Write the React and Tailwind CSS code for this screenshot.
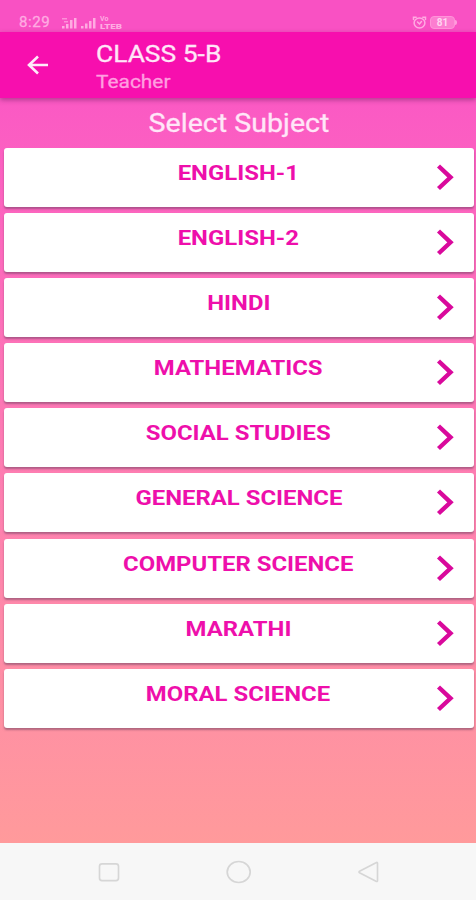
const subjects = [
  "ENGLISH-1",
  "ENGLISH-2",
  "HINDI",
  "MATHEMATICS",
  "SOCIAL STUDIES",
  "GENERAL SCIENCE",
  "COMPUTER SCIENCE",
  "MARATHI",
  "MORAL SCIENCE"
];

const StatusBar = () => {
  return (
    <div className="flex h-8 items-start justify-between bg-[#f951c3] pt-[14px] pr-[19px] pl-[19px] text-[#ffabe2]">
      <div className="flex items-center">
        <span className="w-[42px] origin-left scale-x-[1.04] text-[14.5px] leading-[18px] tracking-[0.5px] [-webkit-text-stroke:0.3px]">
          8:29
        </span>
        <svg width="62" height="17" viewBox="0 0 62 17" fill="currentColor">
          <rect x="1" y="11" width="2.5" height="2.5" />
          <rect x="5" y="9" width="2.5" height="4.5" />
          <rect x="9" y="5" width="2.5" height="8.5" />
          <rect x="13" y="3" width="2.5" height="10.5" />
          <path d="M1 3h5v1.5H1zM3 6h4v1.5H3z" opacity=".7" />
          <rect x="20" y="11" width="2.5" height="2.5" />
          <rect x="24" y="8.500" width="2.500" height="5" />
          <rect x="28" y="6" width="2.500" height="7.500" />
          <rect x="32" y="3" width="2.500" height="10.500" />
          <text x="39" y="5.500" fontSize="7" fontWeight="700">Vo</text>
          <text x="39" y="14" fontSize="8" fontWeight="900" textLength="22" lengthAdjust="spacingAndGlyphs">LTEB</text>
        </svg>
      </div>
      <div className="flex items-center">
        <svg width="15" height="17" viewBox="0 0 15 17" fill="none" stroke="currentColor" strokeWidth="1.500" strokeLinecap="round">
          <ellipse cx="7.500" cy="9" rx="5.400" ry="5" />
          <path d="M1.500 5.500V3.300h2.700M13.500 5.500V3.300h-2.700M5.500 8l2 2 2-2.500" />
        </svg>
        <span className="ml-[3px] flex h-[13px] w-[25px] items-center justify-center rounded-[4px] border border-[#ff94d9] bg-[#fc7dd0] pt-px text-[10px] leading-none font-bold text-[#ffd5f1]">
          81
        </span>
        <span className="h-[5px] w-[2px] rounded-r bg-[#ff9ddc]" />
      </div>
    </div>
  );
};

const Header = () => {
  return (
    <header className="relative flex h-[66px] items-start bg-[#f70fae] shadow-[0_2px_5px_rgba(90,20,80,0.45)]">
      <svg
        className="mt-[22px] ml-[26px]"
        width="24"
        height="22"
        viewBox="0 0 24 22"
        fill="none"
        stroke="#ffeafa"
        strokeWidth="2.6"
      >
        <path d="M22 11H3M12 2.500L3 11l9 8.500" />
      </svg>
      <div className="ml-[46px] pt-[7px]">
        <h1 className="origin-left scale-x-[1.1] text-[24px] leading-[30px] whitespace-nowrap text-[#ffe6f8] [-webkit-text-stroke:0.3px]">
          CLASS 5-B
        </h1>
        <p className="origin-left scale-x-[1.1] text-[19px] leading-[26px] whitespace-nowrap text-[#ff9fe0] [-webkit-text-stroke:0.3px]">
          Teacher
        </p>
      </div>
    </header>
  );
};

const SubjectCard = ({ name }) => {
  return (
    <button
      type="button"
      className="relative flex h-[59px] w-full shrink-0 justify-center rounded-[3px] bg-white pt-[11px] shadow-[0_2px_2px_rgba(100,60,90,0.5)]"
    >
      <span className="h-7 scale-x-[1.138] text-[21px] leading-7 font-bold whitespace-nowrap text-[#ee0fab]">
        {name}
      </span>
      <svg
        className="absolute top-[15px] right-[19px]"
        width="20"
        height="28"
        viewBox="0 0 20 28"
        fill="none"
        stroke="#d9099c"
        strokeWidth="4.4"
      >
        <path d="M3.500 3l12 11.300L3.500 25.500" />
      </svg>
    </button>
  );
};

const NavBar = () => {
  return (
    <nav className="h-[57px] bg-[#f7f7f7]">
      <svg width="476" height="57" viewBox="0 0 476 57" fill="none" stroke="#d6d6d6" strokeWidth="1.7">
        <rect x="99.500" y="20.800" width="19" height="16.800" rx="2.500" />
        <ellipse cx="238.700" cy="29" rx="11.500" ry="10.500" />
        <path d="M376.500 19.500Q377.500 19 377.500 20.500V37.500Q377.500 39 376 38.300L360 30Q358 29 360 28Z" />
      </svg>
    </nav>
  );
};

const App = () => {
  return (
    <div className="flex h-[900px] w-[476px] flex-col overflow-hidden bg-[#f7f7f7] font-[Roboto,sans-serif]">
      <StatusBar />
      <Header />
      <main className="flex-1 bg-linear-to-b from-[#fb59c4] to-[#ff9a9b] pr-[2.5px] pl-[3.5px]">
        <h2 className="h-[49.8px] scale-x-[1.1] pt-[8px] text-center text-[26px] leading-[34px] text-[#ffe6f8] [-webkit-text-stroke:0.3px]">
          Select Subject
        </h2>
        <div className="flex flex-col gap-[6.13px]">
          {subjects.map((name) => (
            <SubjectCard key={name} name={name} />
          ))}
        </div>
      </main>
      <NavBar />
    </div>
  );
};

export default App;
